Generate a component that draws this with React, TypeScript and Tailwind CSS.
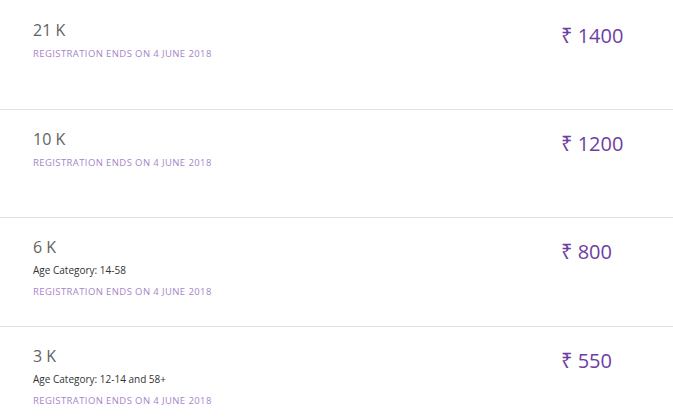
import React from "react";

type Row = { dist: string; age?: string; price: string; h: string; pl: string; pr: string };

const rows: Row[] = [
  { dist: "21 K", price: "1400", h: "h-[110px]", pl: "pt-[21px]", pr: "pt-[24px]" },
  { dist: "10 K", price: "1200", h: "h-[108px]", pl: "pt-[20px]", pr: "pt-[22px]" },
  { dist: "6 K", age: "Age Category: 14-58", price: "800", h: "h-[109px]", pl: "pt-[20px]", pr: "pt-[22px]" },
  { dist: "3 K", age: "Age Category: 12-14 and 58+", price: "550", h: "h-[109px]", pl: "pt-[20px]", pr: "pt-[22px]" },
];

export default function App() {
  return (
    <div
      className="w-[673px] h-[420px] bg-white overflow-hidden"
      style={{ fontFamily: '"Open Sans", "Noto Sans", sans-serif' }}
    >
      {rows.map((r, i) => (
        <div
          key={i}
          className={`${r.h} flex border-b border-[#e3e3e3] pl-[33px]`}
        >
          <div className={`flex-1 ${r.pl}`}>
            <div className="text-[16px] leading-[18px] text-[#636363]">{r.dist}</div>
            {r.age && (
              <div className="mt-[7px] text-[10px] leading-[14px] text-[#333333]">{r.age}</div>
            )}
            <div className="mt-[9px] text-[9.5px] leading-[12px] tracking-[0.4px] text-[#a685c9] uppercase">
              Registration ends on 4 June 2018
            </div>
          </div>
          <div className={`w-[112px] ${r.pr}`}>
            <div className="text-[20px] leading-[24px] text-[#6e3ea3]">
              <span style={{ fontFamily: '"Noto Sans", sans-serif' }}>₹</span> {r.price}
            </div>
          </div>
        </div>
      ))}
    </div>
  );
}
